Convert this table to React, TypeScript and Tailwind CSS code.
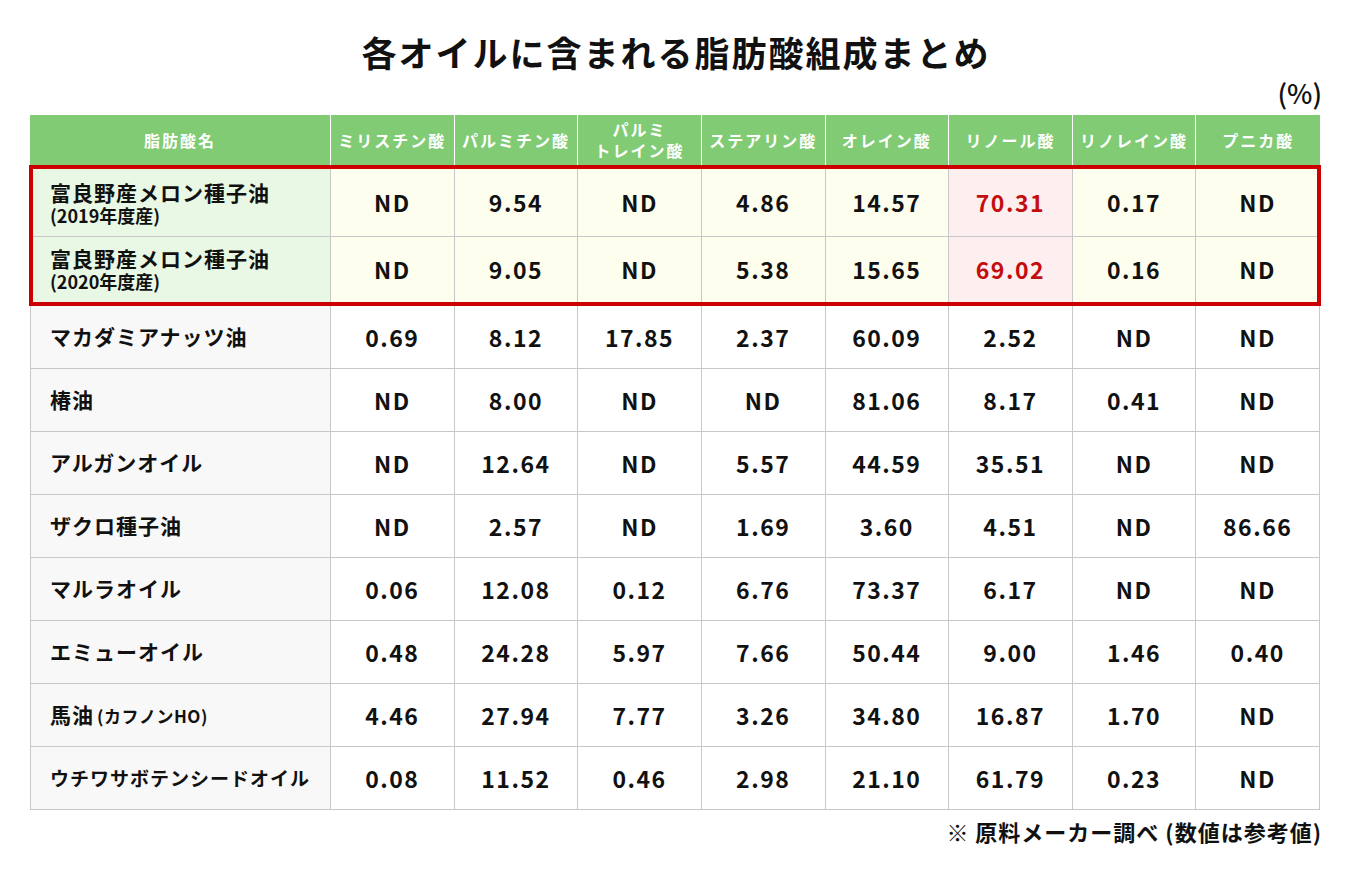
const headers: string[][] = [
  ["ミリスチン酸"],
  ["パルミチン酸"],
  ["パルミ", "トレイン酸"],
  ["ステアリン酸"],
  ["オレイン酸"],
  ["リノール酸"],
  ["リノレイン酸"],
  ["プニカ酸"],
];

type Oil = { name: string; note?: string; inline?: string; values: string[] };

const featured: Oil[] = [
  {
    name: "富良野産メロン種子油",
    note: "(2019年度産)",
    values: ["ND", "9.54", "ND", "4.86", "14.57", "70.31", "0.17", "ND"],
  },
  {
    name: "富良野産メロン種子油",
    note: "(2020年度産)",
    values: ["ND", "9.05", "ND", "5.38", "15.65", "69.02", "0.16", "ND"],
  },
];

const others: Oil[] = [
  { name: "マカダミアナッツ油", values: ["0.69", "8.12", "17.85", "2.37", "60.09", "2.52", "ND", "ND"] },
  { name: "椿油", values: ["ND", "8.00", "ND", "ND", "81.06", "8.17", "0.41", "ND"] },
  { name: "アルガンオイル", values: ["ND", "12.64", "ND", "5.57", "44.59", "35.51", "ND", "ND"] },
  { name: "ザクロ種子油", values: ["ND", "2.57", "ND", "1.69", "3.60", "4.51", "ND", "86.66"] },
  { name: "マルラオイル", values: ["0.06", "12.08", "0.12", "6.76", "73.37", "6.17", "ND", "ND"] },
  { name: "エミューオイル", values: ["0.48", "24.28", "5.97", "7.66", "50.44", "9.00", "1.46", "0.40"] },
  { name: "馬油", inline: "(カフノンHO)", values: ["4.46", "27.94", "7.77", "3.26", "34.80", "16.87", "1.70", "ND"] },
  { name: "ウチワサボテンシードオイル", values: ["0.08", "11.52", "0.46", "2.98", "21.10", "61.79", "0.23", "ND"] },
];

const rowGrid = "grid grid-cols-[301px_repeat(8,minmax(0,1fr))]";

function NameCell({ oil, bg, extra }: { oil: Oil; bg: string; extra?: string }) {
  return (
    <div
      className={`flex flex-col justify-center border-x border-b border-[#c8c8c8] pl-[19px] ${bg} ${extra ?? ""}`}
    >
      <div className="flex items-baseline">
        <span
          className={`font-bold text-[#111] ${
            oil.name.length > 12 ? "text-[19px] tracking-[1px]" : "text-[21px] tracking-[1px]"
          } ${oil.note ? "leading-[25px]" : ""}`}
        >
          {oil.name}
        </span>
        {oil.inline && (
          <span className="ml-[3px] text-[17px] font-bold tracking-[0.5px] text-[#111]">{oil.inline}</span>
        )}
      </div>
      {oil.note && <div className="text-[18px] font-bold leading-[21px] text-[#111]">{oil.note}</div>}
    </div>
  );
}

function ValueCell({ v, bg, red, extra }: { v: string; bg: string; red?: boolean; extra?: string }) {
  return (
    <div
      className={`flex items-center justify-center border-r border-b border-[#c8c8c8] text-[23px] font-bold tracking-[1.5px] ${bg} ${
        red ? "text-[#c40d0d]" : "text-[#111]"
      } ${extra ?? ""}`}
    >
      {v}
    </div>
  );
}

export default function App() {
  return (
    <div className="h-[870px] w-[1352px] bg-white font-['Noto_Sans_CJK_JP','Noto_Sans',sans-serif] text-[#111]">
      <h1 className="pt-[32px] text-center text-[35px] font-bold leading-[40px] tracking-[2px]">
        各オイルに含まれる脂肪酸組成まとめ
      </h1>
      <div className="ml-[30px] w-[1290px]">
        <div className="-mr-[2px] flex h-[43px] justify-end pt-[6px] text-[27px] font-medium leading-[30px]">
          (%)
        </div>

        <div className={`${rowGrid} h-[50px] bg-[#80cb74] text-white`}>
          <div className="flex items-center justify-center border-r border-white text-[16px] font-bold tracking-[2px]">
            脂肪酸名
          </div>
          {headers.map((h, i) => (
            <div
              key={i}
              className={`flex flex-col items-center justify-center text-[16px] font-bold tracking-[2px] ${
                i < 7 ? "border-r border-white" : ""
              } ${h.length > 1 ? "leading-[21px]" : ""}`}
            >
              {h.map((line) => (
                <span key={line}>{line}</span>
              ))}
            </div>
          ))}
        </div>

        <div className="relative">
          {featured.map((oil, r) => (
            <div key={r} className={`${rowGrid} ${r === 0 ? "h-[72px]" : "h-[69px]"}`}>
              <NameCell oil={oil} bg="bg-[#e9f8e4]" extra={r === 0 ? "pt-[4px]" : "pb-[4px]"} />
              {oil.values.map((v, i) => (
                <ValueCell
                  key={i}
                  v={v}
                  bg={i === 5 ? "bg-[#fdeff0]" : "bg-[#fefeef]"}
                  red={i === 5}
                  extra={r === 0 ? "pt-[4px]" : "pb-[4px]"}
                />
              ))}
            </div>
          ))}
          <div className="pointer-events-none absolute -left-px -right-px top-0 bottom-0 border-4 border-[#cc0000]" />
        </div>

        {others.map((oil, r) => (
          <div key={r} className={`${rowGrid} h-[63px]`}>
            <NameCell oil={oil} bg="bg-[#f8f8f8]" />
            {oil.values.map((v, i) => (
              <ValueCell key={i} v={v} bg="bg-white" />
            ))}
          </div>
        ))}

        <div className="-mr-[2px] mt-[7px] flex justify-end text-[22px] font-bold leading-[28px] tracking-[1px]">
          ※ 原料メーカー調べ (数値は参考値)
        </div>
      </div>
    </div>
  );
}
